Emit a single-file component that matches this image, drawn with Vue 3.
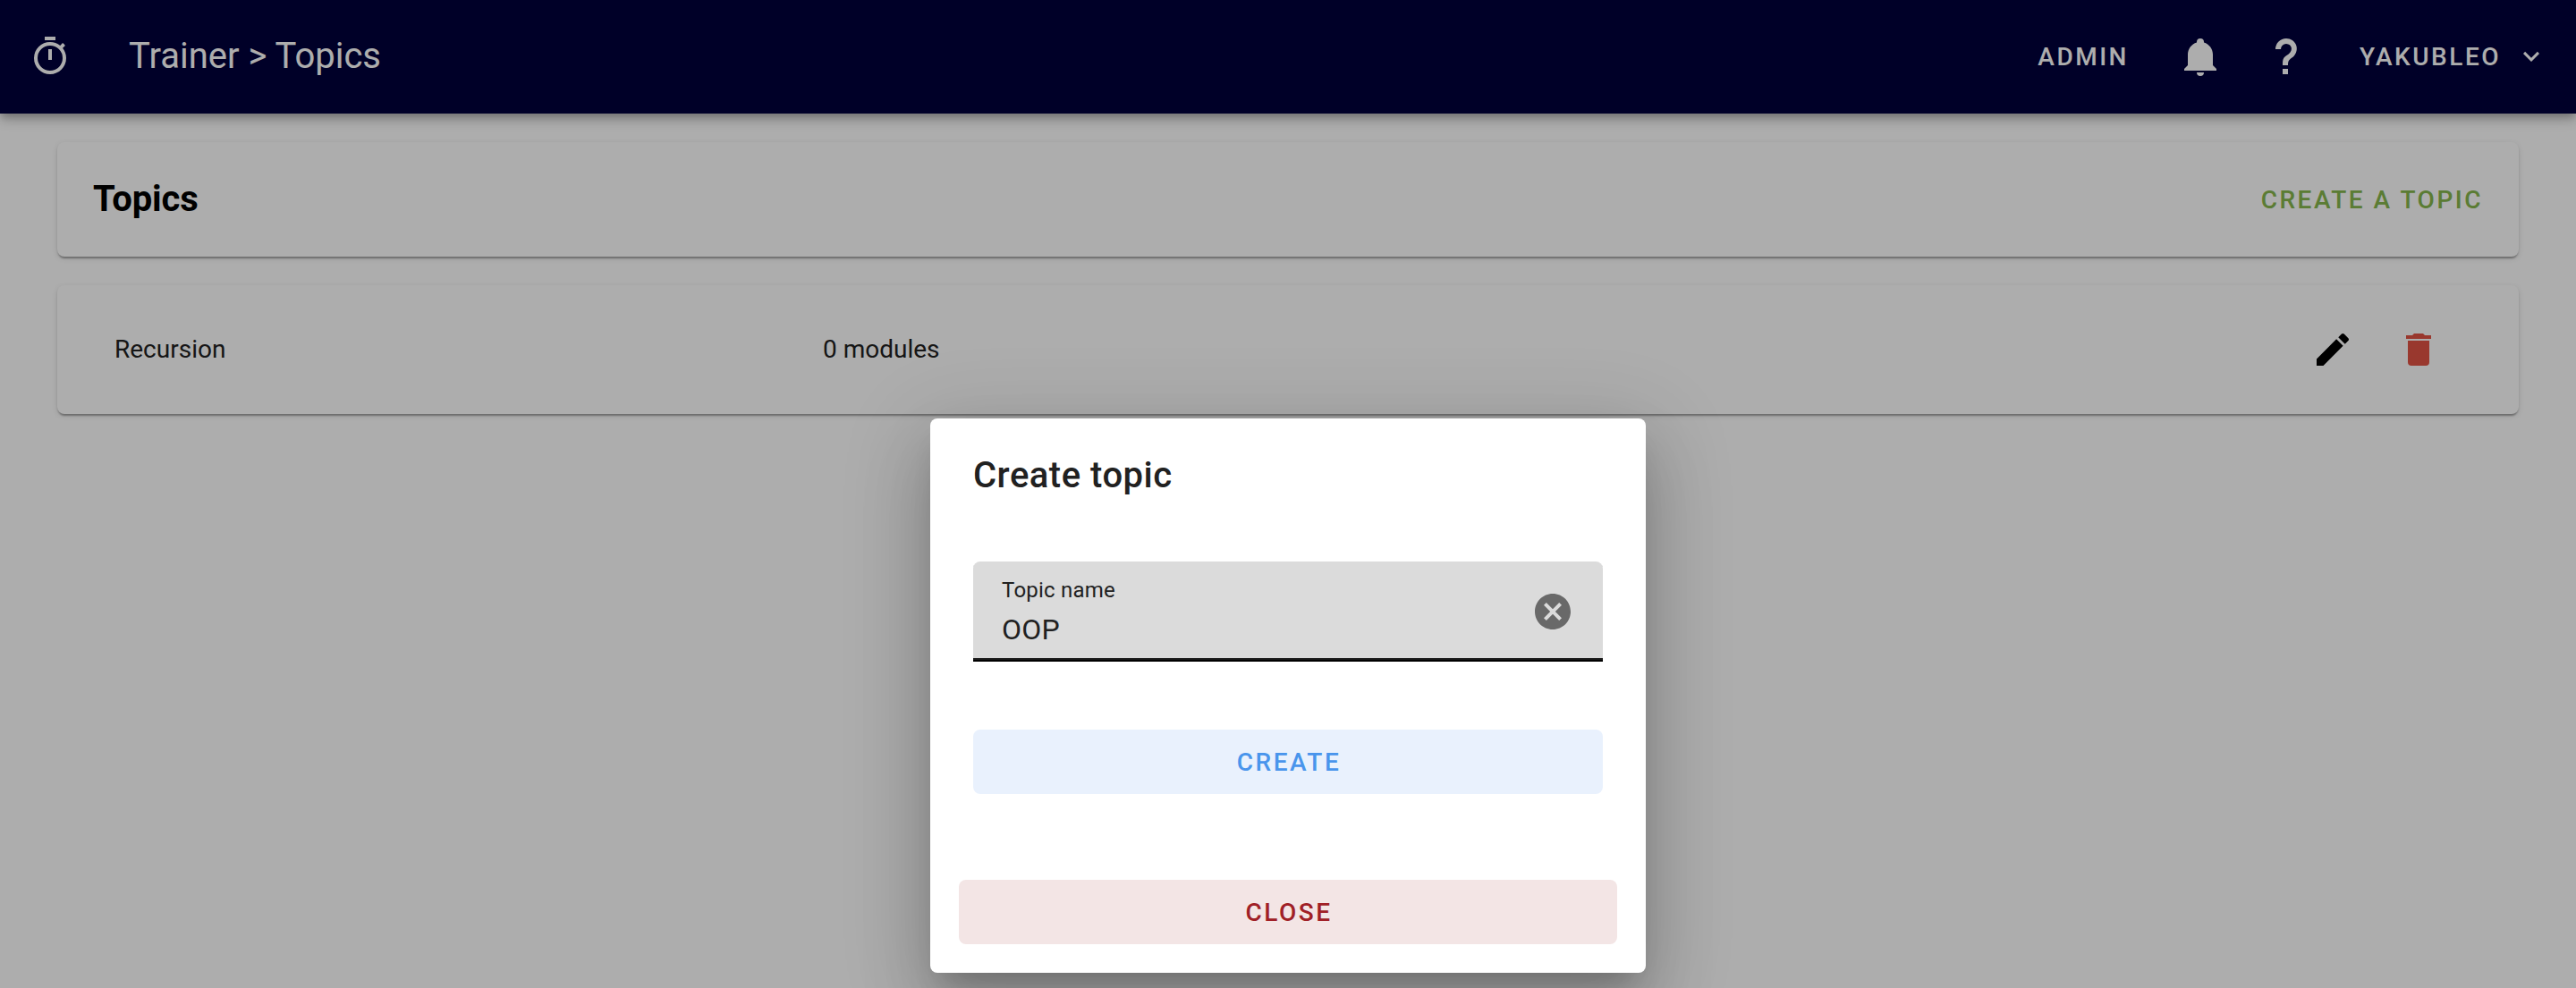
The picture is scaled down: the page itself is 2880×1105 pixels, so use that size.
<script setup>
import { ref } from 'vue'

const icons = {
  timer: 'M12,20A7,7 0 0,1 5,13A7,7 0 0,1 12,6A7,7 0 0,1 19,13A7,7 0 0,1 12,20M19.03,7.39L20.45,5.97C20,5.46 19.55,5 19.04,4.56L17.62,6C16.07,4.74 14.12,4 12,4A9,9 0 0,0 3,13A9,9 0 0,0 12,22C17,22 21,17.97 21,13C21,10.88 20.26,8.93 19.03,7.39M11,14H13V8H11M15,1H9V3H15V1Z',
  bell: 'M21,19V20H3V19L5,17V11C5,7.9 7.03,5.17 10,4.29C10,4.19 10,4.1 10,4A2,2 0 0,1 12,2A2,2 0 0,1 14,4C14,4.1 14,4.19 14,4.29C16.97,5.17 19,7.9 19,11V17L21,19M14,21A2,2 0 0,1 12,23A2,2 0 0,1 10,21',
  help: 'M10,19H13V22H10V19M12,2C17.35,2.22 19.68,7.62 16.5,11.67C15.67,12.67 14.33,13.33 13.67,14.17C13,15 13,16 13,17H10C10,15.33 10,13.92 10.67,12.92C11.33,11.92 12.67,11.33 13.5,10.67C15.92,8.43 15.32,5.26 12,5A3,3 0 0,0 9,8H6A6,6 0 0,1 12,2Z',
  chevron: 'M7.41,8.58L12,13.17L16.59,8.58L18,10L12,16L6,10L7.41,8.58Z',
  pencil: 'M20.71,7.04C21.1,6.65 21.1,6 20.71,5.63L18.37,3.29C18,2.9 17.35,2.9 16.96,3.29L15.12,5.12L18.87,8.87M3,17.25V21H6.75L17.81,9.93L14.06,6.18L3,17.25Z',
  trash: 'M19,4H15.5L14.5,3H9.5L8.5,4H5V6H19M6,19A2,2 0 0,0 8,21H16A2,2 0 0,0 18,19V7H6V19Z',
  clear: 'M12,2C17.53,2 22,6.47 22,12C22,17.53 17.53,22 12,22C6.47,22 2,17.53 2,12C2,6.47 6.47,2 12,2M15.59,7L12,10.59L8.41,7L7,8.41L10.59,12L7,15.59L8.41,17L12,13.41L15.59,17L17,15.59L13.41,12L17,8.41L15.59,7Z',
}

const topics = ref([{ id: 1, name: 'Recursion', modules: 0 }])
const topicName = ref('OOP')
</script>

<template>
  <div class="app">
    <header class="app-bar">
      <svg class="icon" viewBox="0 0 24 24"><path :d="icons.timer" /></svg>
      <div class="app-title">Trainer &gt; Topics</div>
      <nav class="actions">
        <span class="btn-text admin">ADMIN</span>
        <svg class="icon bell" viewBox="0 0 24 24"><path :d="icons.bell" /></svg>
        <svg class="icon help" viewBox="0 0 24 24"><path :d="icons.help" /></svg>
        <span class="btn-text">YAKUBLEO</span>
        <svg class="icon chevron" viewBox="0 0 24 24"><path :d="icons.chevron" /></svg>
      </nav>
    </header>

    <main class="content">
      <section class="card heading-card">
        <h1 class="heading">Topics</h1>
        <span class="btn-text create-link">CREATE A TOPIC</span>
      </section>
      <section v-for="topic in topics" :key="topic.id" class="card topic-card">
        <div class="topic-name">{{ topic.name }}</div>
        <div class="topic-modules">{{ topic.modules }} modules</div>
        <div class="topic-actions">
          <svg class="icon edit" viewBox="0 0 24 24"><path :d="icons.pencil" /></svg>
          <svg class="icon delete" viewBox="0 0 24 24"><path :d="icons.trash" /></svg>
        </div>
      </section>
    </main>

    <div class="overlay">
      <div class="dialog">
        <h2 class="dialog-title">Create topic</h2>
        <div class="field">
          <div class="field-text">
            <div class="field-label">Topic name</div>
            <div class="field-value">{{ topicName }}</div>
          </div>
          <svg class="icon clear" viewBox="0 0 24 24"><path :d="icons.clear" /></svg>
        </div>
        <div class="btn create">CREATE</div>
        <div class="btn close">CLOSE</div>
      </div>
    </div>
  </div>
</template>

<style>
body {
  margin: 0;
  background: #fff;
}
</style>

<style scoped>
.app {
  position: relative;
  width: 2880px;
  height: 1105px;
  overflow: hidden;
  background: #fff;
  color: #212121;
  font-family: Roboto, sans-serif;
  font-size: 28px;
}
.icon {
  display: block;
  flex: none;
  width: 48px;
  height: 48px;
  fill: currentColor;
}
.btn-text {
  padding-top: 2px;
  font-size: 28px;
  font-weight: 500;
  letter-spacing: 2.5px;
  line-height: 40px;
  white-space: nowrap;
}
.app-bar {
  position: relative;
  display: flex;
  align-items: center;
  box-sizing: border-box;
  height: 127px;
  padding: 0 32px 1px;
  background: #00003b;
  color: #fff;
  box-shadow: 0 4px 8px -2px rgba(0, 0, 0, 0.2), 0 8px 10px 0 rgba(0, 0, 0, 0.14), 0 2px 20px 0 rgba(0, 0, 0, 0.12);
}
.app-title {
  margin-left: 64px;
  font-size: 40px;
  line-height: 60px;
  white-space: nowrap;
}
.actions {
  display: flex;
  align-items: center;
  margin-left: auto;
}
.bell {
  margin-left: 56px;
}
.help {
  margin-left: 48px;
  margin-right: 58px;
}
.chevron {
  width: 36px;
  height: 36px;
  margin-left: 16px;
}
.content {
  display: flex;
  flex-direction: column;
  gap: 32px;
  padding: 32px 64px;
}
.card {
  display: flex;
  align-items: center;
  box-sizing: border-box;
  border-radius: 8px;
  background: #fff;
  box-shadow: 0 4px 2px -2px rgba(0, 0, 0, 0.2), 0 2px 2px 0 rgba(0, 0, 0, 0.14), 0 2px 6px 0 rgba(0, 0, 0, 0.12);
}
.heading-card {
  justify-content: space-between;
  height: 128px;
  padding: 0 40px;
}
.heading {
  margin: 0;
  color: #000;
  font-size: 40px;
  font-weight: 700;
  letter-spacing: -0.15px;
  line-height: 60px;
}
.create-link {
  color: #86b74d;
}
.topic-card {
  height: 144px;
  padding: 0 88px 0 64px;
  line-height: 34px;
}
.topic-name {
  width: 792px;
}
.topic-actions {
  display: flex;
  gap: 48px;
  margin-left: auto;
}
.edit {
  color: #000;
}
.delete {
  color: #e25344;
}
.overlay {
  position: absolute;
  inset: 0;
  display: flex;
  justify-content: center;
  align-items: flex-start;
  padding-top: 468px;
  background: rgba(0, 0, 0, 0.32);
}
.dialog {
  display: flex;
  flex-direction: column;
  box-sizing: border-box;
  width: 800px;
  height: 620px;
  padding: 32px 32px;
  border-radius: 8px;
  background: #fff;
  box-shadow: 0 22px 30px -14px rgba(0, 0, 0, 0.2), 0 48px 76px 6px rgba(0, 0, 0, 0.14), 0 18px 92px 16px rgba(0, 0, 0, 0.12);
}
.dialog-title {
  margin: 0 16px;
  font-size: 40px;
  font-weight: 500;
  letter-spacing: 0.5px;
  line-height: 64px;
}
.field {
  display: flex;
  align-items: flex-start;
  justify-content: space-between;
  box-sizing: border-box;
  height: 112px;
  margin: 64px 16px 0;
  padding: 0 32px;
  border-bottom: 2px solid #000;
  border-radius: 8px 8px 0 0;
  background: #dbdbdb;
  box-shadow: inset 0 -2px 0 #1c1c1c;
}
.field-label {
  margin-top: 16px;
  font-size: 24px;
  letter-spacing: 0.22px;
  line-height: 32px;
}
.field-value {
  margin-top: 4px;
  font-size: 32px;
  letter-spacing: 0.2px;
  line-height: 48px;
}
.clear {
  margin-top: 32px;
  color: #696969;
}
.btn {
  box-sizing: border-box;
  height: 72px;
  padding: 1px 0 0 2px;
  border-radius: 8px;
  font-size: 28px;
  font-weight: 500;
  letter-spacing: 2.5px;
  line-height: 72px;
  text-align: center;
}
.create {
  margin: 76px 16px 0;
  background: #e9f1fd;
  color: #4995ec;
}
.close {
  margin-top: 96px;
  background: #f3e5e5;
  color: #a01f27;
}
</style>
